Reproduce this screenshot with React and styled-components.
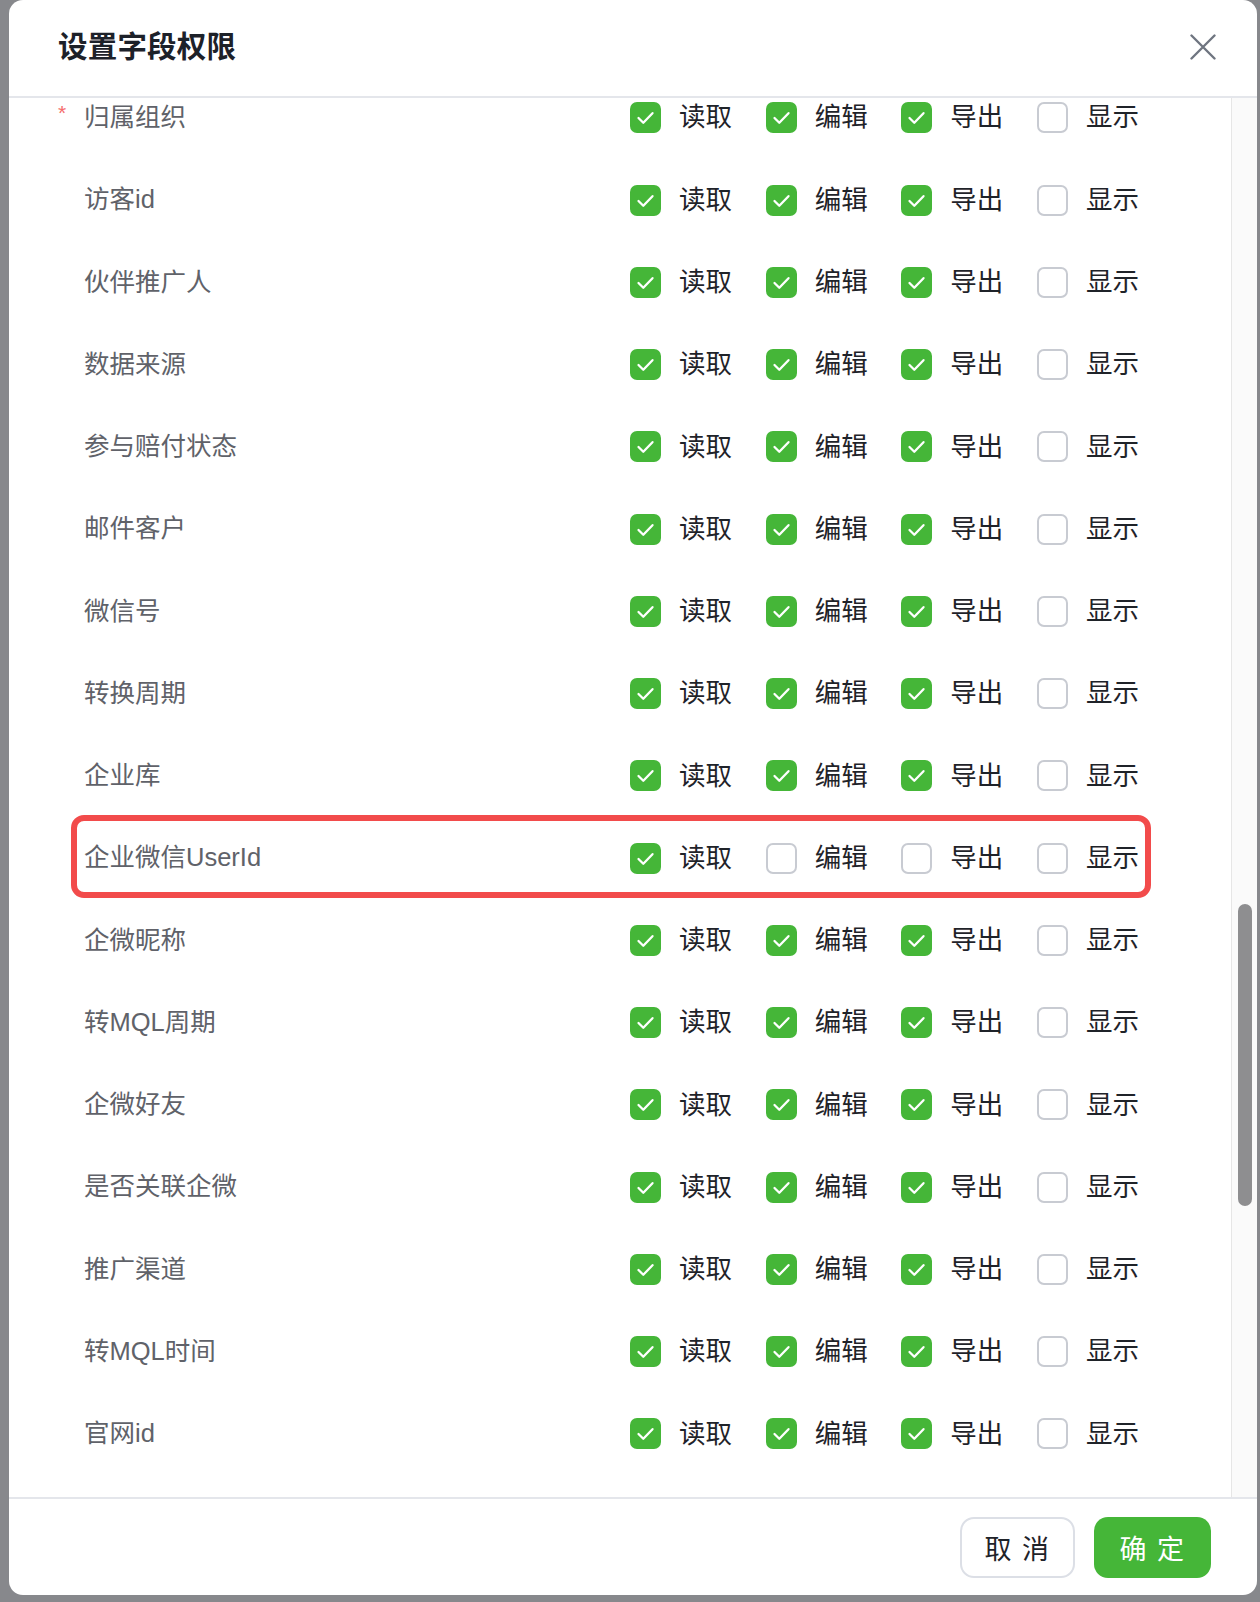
import React from 'react';
import styled, { createGlobalStyle } from 'styled-components';

const GlobalStyle = createGlobalStyle`
    html, body {
        margin: 0;
        padding: 0;
        background: #87888c;
    }
    body {
        font-family: "Liberation Sans", "Noto Sans CJK SC", sans-serif;
        -webkit-font-smoothing: antialiased;
    }
`;

const Backdrop = styled.div`
    min-height: 100vh;
    box-sizing: border-box;
    padding: 0 3px 7px 9px;
    background: #87888c;
`;

const Modal = styled.div`
    height: 1595px;
    background: #fff;
    border-radius: 14px;
    display: flex;
    flex-direction: column;
    overflow: hidden;
`;

const Header = styled.div`
    height: 96px;
    flex: none;
    display: flex;
    align-items: center;
    justify-content: space-between;
    padding: 0 41px 0 49px;
    border-bottom: 2px solid #e4e6eb;
`;

const Title = styled.h2`
    margin: 0 0 2px;
    font-size: 29.5px;
    line-height: 1;
    font-weight: 700;
    color: #1d2129;
    letter-spacing: 0.2px;
`;

const CloseButton = styled.button`
    width: 26px;
    height: 26px;
    padding: 0;
    margin-bottom: 2px;
    border: none;
    background: none;
    cursor: pointer;
    display: flex;
    align-items: center;
    justify-content: center;
`;

const Body = styled.div`
    flex: 1;
    display: flex;
    min-height: 0;
`;

const Viewport = styled.div`
    flex: 1;
    overflow: hidden;
`;

const List = styled.div`
    margin-top: -21.4px;
`;

const Row = styled.div`
    position: relative;
    height: 82.28px;
    display: flex;
    align-items: center;
    padding-left: 49px;

    ${p => p.$highlight && `
        &::after {
            content: "";
            position: absolute;
            left: 62px;
            right: 80px;
            top: -2px;
            bottom: 1px;
            border: 6px solid #f24b4b;
            border-radius: 13px;
            pointer-events: none;
        }
    `}
`;

const LabelCell = styled.div`
    width: 572px;
    display: flex;
    align-items: center;
`;

const Required = styled.span`
    width: 26px;
    font-size: 21px;
    line-height: 1;
    color: #f56c6c;
    margin-bottom: 10px;
`;

const Label = styled.span`
    font-size: 25.5px;
    line-height: 1;
    color: #606269;
`;

const Options = styled.div`
    display: grid;
    grid-template-columns: repeat(4, 135.67px);
`;

const Option = styled.label`
    display: flex;
    align-items: center;
    gap: 18px;
    cursor: pointer;
`;

const Box = styled.span`
    width: 31px;
    height: 31px;
    box-sizing: border-box;
    border-radius: 7px;
    display: flex;
    align-items: center;
    justify-content: center;
    background: ${p => (p.$checked ? '#45b638' : '#fff')};
    border: ${p => (p.$checked ? 'none' : '2px solid #c8cbd2')};
`;

const OptionText = styled.span`
    font-size: 26.5px;
    line-height: 1;
    color: #1f2329;
`;

const ScrollTrack = styled.div`
    width: 26px;
    flex: none;
    border-left: 1px solid #e6e6e6;
    background: #fafafa;
    padding: 806px 0 0 6px;
    box-sizing: border-box;
`;

const Thumb = styled.div`
    width: 14px;
    height: 302px;
    border-radius: 7px;
    background: #8e8e90;
`;

const Footer = styled.div`
    height: 96px;
    flex: none;
    border-top: 2px solid #e4e6eb;
    display: flex;
    align-items: center;
    justify-content: flex-end;
    gap: 19px;
    padding-right: 46px;
`;

const Button = styled.button`
    height: 61px;
    width: ${p => (p.$primary ? '117px' : '115px')};
    border-radius: 14px;
    font-family: "Liberation Sans", "Noto Sans CJK SC", sans-serif;
    font-size: 27px;
    letter-spacing: 1.5px;
    cursor: pointer;
    box-sizing: border-box;
    border: ${p => (p.$primary ? 'none' : '2px solid #dcdfe6')};
    background: ${p => (p.$primary ? '#45b638' : '#fff')};
    color: ${p => (p.$primary ? '#fff' : '#1f2329')};
`;

const PERMS = ['读取', '编辑', '导出', '显示'];

const fields = [
    { name: '归属组织', required: true, checks: [1, 1, 1, 0] },
    { name: '访客id', checks: [1, 1, 1, 0] },
    { name: '伙伴推广人', checks: [1, 1, 1, 0] },
    { name: '数据来源', checks: [1, 1, 1, 0] },
    { name: '参与赔付状态', checks: [1, 1, 1, 0] },
    { name: '邮件客户', checks: [1, 1, 1, 0] },
    { name: '微信号', checks: [1, 1, 1, 0] },
    { name: '转换周期', checks: [1, 1, 1, 0] },
    { name: '企业库', checks: [1, 1, 1, 0] },
    { name: '企业微信UserId', checks: [1, 0, 0, 0], highlight: true },
    { name: '企微昵称', checks: [1, 1, 1, 0] },
    { name: '转MQL周期', checks: [1, 1, 1, 0] },
    { name: '企微好友', checks: [1, 1, 1, 0] },
    { name: '是否关联企微', checks: [1, 1, 1, 0] },
    { name: '推广渠道', checks: [1, 1, 1, 0] },
    { name: '转MQL时间', checks: [1, 1, 1, 0] },
    { name: '官网id', checks: [1, 1, 1, 0] },
];

const Check = () => (
    <svg width="31" height="31" viewBox="0 0 31 31" fill="none">
        <polyline points="8.5,16 13.3,20.8 22.5,11.2" stroke="#fff" strokeWidth="2.3" strokeLinecap="round" strokeLinejoin="round" />
    </svg>
);

const App = () => {
    return (
        <Backdrop>
            <GlobalStyle />
            <Modal>
                <Header>
                    <Title>设置字段权限</Title>
                    <CloseButton aria-label="关闭">
                        <svg width="26" height="26" viewBox="0 0 26 26">
                            <path d="M1.5 1.5 L24.5 24.5 M24.5 1.5 L1.5 24.5" stroke="#6f7580" strokeWidth="2.4" strokeLinecap="round" />
                        </svg>
                    </CloseButton>
                </Header>
                <Body>
                    <Viewport>
                        <List>
                            {fields.map(f => (
                                <Row key={f.name} $highlight={f.highlight}>
                                    <LabelCell>
                                        <Required>{f.required ? '*' : ''}</Required>
                                        <Label>{f.name}</Label>
                                    </LabelCell>
                                    <Options>
                                        {PERMS.map((p, i) => (
                                            <Option key={p}>
                                                <Box $checked={!!f.checks[i]}>{f.checks[i] ? <Check /> : null}</Box>
                                                <OptionText>{p}</OptionText>
                                            </Option>
                                        ))}
                                    </Options>
                                </Row>
                            ))}
                        </List>
                    </Viewport>
                    <ScrollTrack>
                        <Thumb />
                    </ScrollTrack>
                </Body>
                <Footer>
                    <Button>取 消</Button>
                    <Button $primary>确 定</Button>
                </Footer>
            </Modal>
        </Backdrop>
    );
};

export default App;
